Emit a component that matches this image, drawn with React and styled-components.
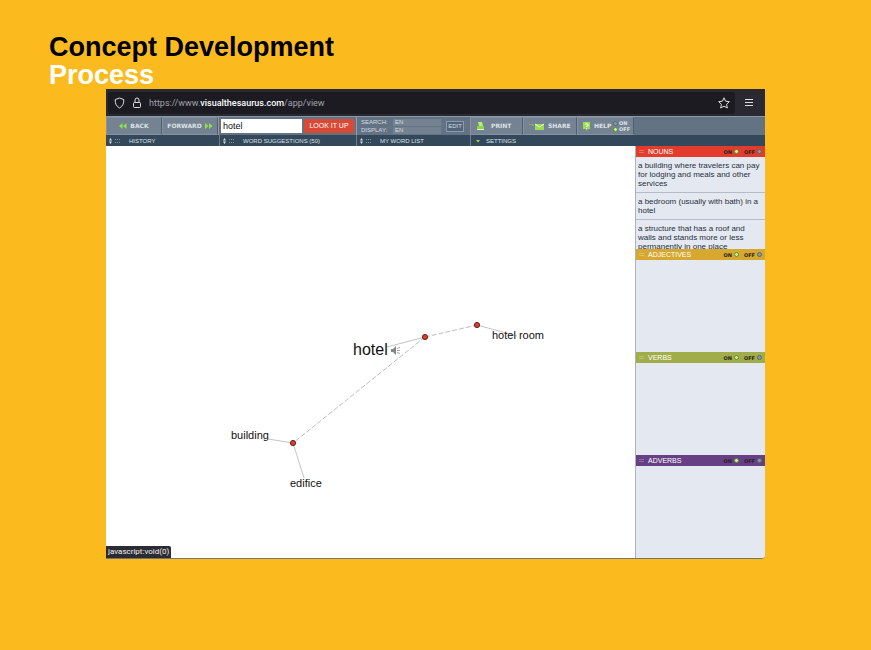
import React, { useState } from "react";
import styled, { createGlobalStyle } from "styled-components";

const GlobalStyle = createGlobalStyle`
	* {
		box-sizing: border-box;
	}
	body {
		margin: 0;
		background: #fbbb1e;
		font-family: "Liberation Sans", Arial, sans-serif;
	}
	button,
	input {
		margin: 0;
		padding: 0;
		border: 0;
		font: inherit;
		color: inherit;
	}
	button {
		background: none;
		cursor: pointer;
	}
	svg {
		flex: none;
	}
`;

const tabs = [
	{ title: "HISTORY", width: 113, handle: true },
	{ title: "WORD SUGGESTIONS (50)", width: 137, handle: true },
	{ title: "MY WORD LIST", width: 114, handle: true },
	{ title: "SETTINGS", handle: false },
];

const wordClasses = [
	{
		name: "NOUNS",
		color: "#e33c2d",
		meanings: [
			"a building where travelers can pay for lodging and meals and other services",
			"a bedroom (usually with bath) in a hotel",
			"a structure that has a roof and walls and stands more or less permanently in one place",
		],
	},
	{ name: "ADJECTIVES", color: "#d6a82f", meanings: [] },
	{ name: "VERBS", color: "#a1ad48", meanings: [] },
	{ name: "ADVERBS", color: "#673f85", meanings: [] },
];

const words = [
	{ text: "hotel", x: 247, y: 195, size: 16 },
	{ text: "hotel room", x: 386, y: 183, size: 11 },
	{ text: "building", x: 125, y: 283, size: 11 },
	{ text: "edifice", x: 184, y: 331, size: 11 },
];

const meaningNodes = [
	[319, 191],
	[371, 179],
	[187, 297],
];

const wordLines = [
	[319, 191, 281, 201],
	[371, 179, 411, 190],
	[187, 297, 162, 293],
	[187, 297, 198, 332],
];

const meaningLines = [
	[319, 191, 371, 179],
	[319, 191, 187, 297],
];

const Slide = styled.main`
	min-height: 100vh;
	padding: 33px 0 40px;
`;

const Title = styled.h1`
	margin: 0 49px;
	font-size: 27px;
	line-height: 28px;
	font-weight: 700;
	color: #000;

	span {
		display: block;
		color: #fff;
	}
`;

const Browser = styled.section`
	margin: 0 106px;
	overflow: hidden;
	background: #fff;
	border-bottom: 1px solid #77766c;
	border-radius: 0 0 4px 0;
`;

const AddressBar = styled.header`
	display: flex;
	align-items: center;
	height: 27px;
	padding-right: 10px;
	background: #2a2931;
	color: #dedee2;

	button {
		display: flex;
	}
`;

const Address = styled.div`
	display: flex;
	flex: 1;
	align-items: center;
	gap: 7px;
	height: 22px;
	margin: 0 8px 0 2px;
	padding: 0 5px 0 6px;
	border-radius: 3px;
	background: #1c1b22;
`;

const Url = styled.a`
	flex: 1;
	font-family: Roboto, sans-serif;
	font-size: 9px;
	line-height: 12px;
	color: #a3a2aa;
	text-decoration: none;

	b {
		font-weight: 500;
		color: #fbfbfe;
	}
`;

const Toolbar = styled.div`
	display: flex;
	height: 19px;
	background: #637383;
	border-top: 1px solid #8798a6;
`;

const ToolButton = styled.button`
	display: flex;
	align-items: center;
	justify-content: ${({ $start }) => ($start ? "flex-start" : "center")};
	gap: ${({ $gap }) => $gap || 3}px;
	width: ${({ $width }) => $width}px;
	padding-left: ${({ $start }) => ($start ? 5 : 0)}px;
	border: 1px solid #8391a0;
	border-right-color: #4f6071;
	background: #758292;
	font-family: "DejaVu Sans", sans-serif;
	font-size: 6px;
	line-height: 8px;
	font-weight: 700;
	color: #dce3e8;
`;

const SearchForm = styled.form`
	display: flex;
	align-items: center;
	gap: 2px;
	width: 138px;
	padding: 0 2px;
	border-left: 1px solid #9a9aa7;

	input {
		flex: 1;
		min-width: 0;
		height: 14px;
		padding: 0 2px;
		background: #fff;
		font-size: 9px;
		color: #111;
	}
	button {
		width: 50px;
		height: 14px;
		background: #d84a35;
		font-size: 7px;
		line-height: 10px;
		color: #fff;
	}
`;

const Languages = styled.div`
	display: flex;
	align-items: center;
	justify-content: space-between;
	width: 114px;
	padding: 0 6px 0 4px;
	border-left: 1px solid #9a9aa7;
	font-size: 6px;
	color: #d4dce2;

	dl {
		display: grid;
		grid-template-columns: 32px 48px;
		row-gap: 1px;
		margin: 0;
		line-height: 7px;
	}
	dd {
		margin: 0;
		padding-left: 2px;
		background: #748291;
	}
	button {
		width: 18px;
		height: 11px;
		border: 1px solid #8c9ba9;
		background: #506678;
		font-size: 6px;
		line-height: 8px;
	}
`;

const HelpGroup = styled.div`
	display: flex;
	align-items: center;
	width: 57px;
	border: 1px solid #8391a0;
	border-right-color: #4f6071;
	background: #758292;

	${ToolButton} {
		height: 100%;
		border: 0;
	}
`;

const SwitchGroup = styled.div`
	display: flex;
	flex-direction: ${({ $stacked }) => ($stacked ? "column" : "row")};
	gap: ${({ $stacked }) => ($stacked ? 0 : 5)}px;
	font-family: "DejaVu Sans", sans-serif;
	font-size: 5px;
	line-height: 6px;
	font-weight: 700;
	color: ${({ $stacked }) => ($stacked ? "#dce3e8" : "#29221e")};

	label {
		display: flex;
		flex-direction: ${({ $stacked }) => ($stacked ? "row" : "row-reverse")};
		align-items: center;
		gap: ${({ $stacked }) => ($stacked ? 1 : 2)}px;
	}
	input {
		flex: none;
		appearance: none;
		width: 5px;
		height: 5px;
		border: 1px solid #59686a;
		border-radius: 50%;
		background: #8a99a3;
	}
	input:checked {
		border-color: #5f8b3d;
		background: #c6f58a;
	}
`;

const TabBar = styled.nav`
	display: flex;
	height: 11px;
	background: #33485b;
`;

const Tab = styled.button`
	display: flex;
	align-items: center;
	flex: ${({ $width }) => ($width ? `0 0 ${$width}px` : 1)};
	padding-left: 3px;
	border-left: 1px solid #77798a;
	font-size: 6px;
	line-height: 8px;
	color: #dce2e8;
	text-align: left;
	white-space: nowrap;

	&:first-child {
		border-left: 0;
	}
	svg {
		margin-right: ${({ $handle }) => ($handle ? 8 : 0)}px;
	}
`;

const Workspace = styled.div`
	display: flex;
`;

const WordMap = styled.div`
	position: relative;
	flex: 1;
	min-width: 0;
	overflow: hidden;
	background: #fff;

	> svg {
		position: absolute;
		inset: 0;
		width: 100%;
		height: 100%;
	}
`;

const Word = styled.button`
	position: absolute;
	left: ${({ $x }) => $x}px;
	top: ${({ $y }) => $y}px;
	font-size: ${({ $size }) => $size}px;
	line-height: ${({ $size }) => $size + 2}px;
	color: #111;
	white-space: nowrap;
`;

const SoundButton = styled.button`
	position: absolute;
	left: 285px;
	top: 200px;
	display: flex;
`;

const StatusTip = styled.div`
	position: absolute;
	left: 0;
	bottom: 0;
	padding: 1px 2px;
	border-radius: 0 2px 0 0;
	background: #2c2b31;
	font-family: Roboto, sans-serif;
	font-size: 8px;
	line-height: 10px;
	color: #f2f2f4;
`;

const Sidebar = styled.aside`
	width: 130px;
	border-left: 1px solid #aeb2bc;
	background: #e4e8f1;
`;

const ClassHeader = styled.header`
	display: flex;
	align-items: center;
	height: 11px;
	padding: 0 3px;
	background: ${({ $color }) => $color};

	h2 {
		flex: 1;
		margin: 0 0 0 3px;
		font-size: 7px;
		line-height: 9px;
		font-weight: 400;
		color: #fff;
	}
`;

const Meanings = styled.ul`
	height: 92px;
	margin: 0;
	padding: 0;
	overflow: hidden;
	list-style: none;

	li {
		padding: 4px 2px;
		border-bottom: 1px solid #b5bbc6;
		font-size: 8px;
		line-height: 9px;
		color: #27313d;
	}
`;

const ShieldIcon = () => (
	<svg width="11" height="12" viewBox="0 0 11 12" fill="none" stroke="currentColor">
		<path d="M5.5 1 9.8 2.6C10 6.5 8.6 9.4 5.5 11 2.4 9.4 1 6.5 1.2 2.6Z" strokeLinejoin="round" />
	</svg>
);

const LockIcon = () => (
	<svg width="10" height="12" viewBox="0 0 10 12" fill="none" stroke="currentColor">
		<rect x="1.5" y="5.5" width="7" height="5" rx="1" />
		<path d="M3 5.5V3a2 2 0 0 1 4 0v2.5" />
	</svg>
);

const StarIcon = () => (
	<svg width="12" height="12" viewBox="0 0 12 12" fill="none" stroke="currentColor">
		<path
			d="m6 .8 1.6 3.4 3.7.5-2.7 2.6.7 3.7L6 9.200 2.700 11l.7-3.700L.7 4.700l3.700-.5Z"
			strokeLinejoin="round"
		/>
	</svg>
);

const MenuIcon = () => (
	<svg width="12" height="9" viewBox="0 0 12 9" stroke="currentColor">
		<path d="M2 1.5h8M2 4.5h8M2 7.5h8" />
	</svg>
);

const Arrows = ({ forward }) => (
	<svg width="8" height="6" viewBox="0 0 8 6" fill="#93e04e">
		{forward ? (
			<path d="M0 0v6l3.5-3ZM4 0v6l3.5-3Z" />
		) : (
			<path d="M3.5 0v6L0 3ZM7.5 0v6L4 3Z" />
		)}
	</svg>
);

const PrintIcon = () => (
	<svg width="9" height="10" viewBox="0 0 9 10">
		<path d="M2 1h4l1 4H3Z" fill="#b9ee74" />
		<path d="M1 5h7v3H1Z" fill="#8fd445" />
		<path d="M1 8h7v1H1Z" fill="#e3f3d3" />
	</svg>
);

const MailIcon = () => (
	<svg width="15" height="7" viewBox="0 0 15 7">
		<path d="M0 1h5v2H3V2H0Z" fill="#86a86f" />
		<rect x="6" y="1" width="9" height="6" fill="#9bdd55" />
		<path d="m6 1 4.5 3L15 1" fill="none" stroke="#ecffd5" />
	</svg>
);

const HelpIcon = () => (
	<svg width="7" height="10" viewBox="0 0 7 10">
		<path d="M0 1h7v7H5L3 10V8H0Z" fill="#9bdc55" />
		<path d="M2 3h3v2H3.5v1M3.5 7v1" fill="none" stroke="#effbe3" />
	</svg>
);

const SoundIcon = () => (
	<svg width="10" height="9" viewBox="0 0 10 9">
		<path d="M0 3h2l3-3v9L2 6H0Z" fill="#858585" />
		<path d="m6 2.5 3-1M6 4.5h3M6 6.5l3 1" stroke="#a5a5a5" />
	</svg>
);

const TabMarker = ({ handle }) =>
	handle ? (
		<svg width="12" height="6" viewBox="0 0 12 6">
			<path d="m0 2.5 1.5-2.500L3 2.500ZM0 3.500h3L1.500 6Z" fill="#d8dfe5" />
			<path
				d="M6 1.5h1M8 1.5h1M10 1.5h1M6 4.5h1M8 4.5h1M10 4.5h1"
				stroke="#8293a1"
			/>
		</svg>
	) : (
		<svg width="12" height="6" viewBox="0 0 12 6">
			<path d="M2 2h4L4 4.5Z" fill="#a7d650" />
		</svg>
	);

const GripIcon = () => (
	<svg width="6" height="5" viewBox="0 0 6 5">
		<path d="M0 1.5h5M0 3.5h5" stroke="#fff" strokeOpacity=".25" />
	</svg>
);

const OnOff = ({ name, initial, stacked }) => {
	const [value, setValue] = useState(initial);

	return (
		<SwitchGroup $stacked={stacked}>
			{["ON", "OFF"].map((option) => (
				<label key={option}>
					<input
						type="radio"
						name={name}
						checked={value === option}
						onChange={() => setValue(option)}
					/>
					{option}
				</label>
			))}
		</SwitchGroup>
	);
};

const MapLines = () => (
	<svg fill="none">
		{wordLines.map(([x1, y1, x2, y2]) => (
			<line key={`${x2}-${y2}`} x1={x1} y1={y1} x2={x2} y2={y2} stroke="#c4c4c4" />
		))}
		{meaningLines.map(([x1, y1, x2, y2]) => (
			<line
				key={`${x2}-${y2}`}
				x1={x1}
				y1={y1}
				x2={x2}
				y2={y2}
				stroke="#bdbdbd"
				strokeDasharray="5 2"
			/>
		))}
		{meaningNodes.map(([cx, cy]) => (
			<circle key={cx} cx={cx} cy={cy} r="2.6" fill="#e23b24" stroke="#5b2a22" />
		))}
	</svg>
);

const App = () => {
	const [query, setQuery] = useState("hotel");

	return (
		<>
			<GlobalStyle />
			<Slide>
				<Title>
					Concept Development <span>Process</span>
				</Title>
				<Browser>
					<AddressBar>
						<Address>
							<ShieldIcon />
							<LockIcon />
							<Url href="#view">
								https://www.<b>visualthesaurus.com</b>/app/view
							</Url>
							<button type="button" aria-label="Bookmark">
								<StarIcon />
							</button>
						</Address>
						<button type="button" aria-label="Menu">
							<MenuIcon />
						</button>
					</AddressBar>
					<Toolbar>
						<ToolButton type="button" $width={56}>
							<Arrows />
							BACK
						</ToolButton>
						<ToolButton type="button" $width={56}>
							FORWARD
							<Arrows forward />
						</ToolButton>
						<SearchForm onSubmit={(e) => e.preventDefault()}>
							<input
								aria-label="Word"
								value={query}
								onChange={(e) => setQuery(e.target.value)}
							/>
							<button type="submit">LOOK IT UP</button>
						</SearchForm>
						<Languages>
							<dl>
								<dt>SEARCH:</dt>
								<dd>EN</dd>
								<dt>DISPLAY:</dt>
								<dd>EN</dd>
							</dl>
							<button type="button">EDIT</button>
						</Languages>
						<ToolButton type="button" $width={53} $gap={6} $start>
							<PrintIcon />
							PRINT
						</ToolButton>
						<ToolButton type="button" $width={54} $gap={4} $start>
							<MailIcon />
							SHARE
						</ToolButton>
						<HelpGroup>
							<ToolButton type="button" $width={35} $gap={4} $start>
								<HelpIcon />
								HELP
							</ToolButton>
							<OnOff name="help" initial="OFF" stacked />
						</HelpGroup>
					</Toolbar>
					<TabBar>
						{tabs.map(({ title, width, handle }) => (
							<Tab key={title} type="button" $width={width} $handle={handle}>
								<TabMarker handle={handle} />
								{title}
							</Tab>
						))}
					</TabBar>
					<Workspace>
						<WordMap>
							<MapLines />
							{words.map(({ text, x, y, size }) => (
								<Word key={text} type="button" $x={x} $y={y} $size={size}>
									{text}
								</Word>
							))}
							<SoundButton type="button" aria-label="Pronounce">
								<SoundIcon />
							</SoundButton>
							<StatusTip>javascript:void(0)</StatusTip>
						</WordMap>
						<Sidebar>
							{wordClasses.map(({ name, color, meanings }) => (
								<section key={name}>
									<ClassHeader $color={color}>
										<GripIcon />
										<h2>{name}</h2>
										<OnOff name={name} initial="ON" />
									</ClassHeader>
									<Meanings>
										{meanings.map((meaning) => (
											<li key={meaning}>{meaning}</li>
										))}
									</Meanings>
								</section>
							))}
						</Sidebar>
					</Workspace>
				</Browser>
			</Slide>
		</>
	);
};

export default App;
